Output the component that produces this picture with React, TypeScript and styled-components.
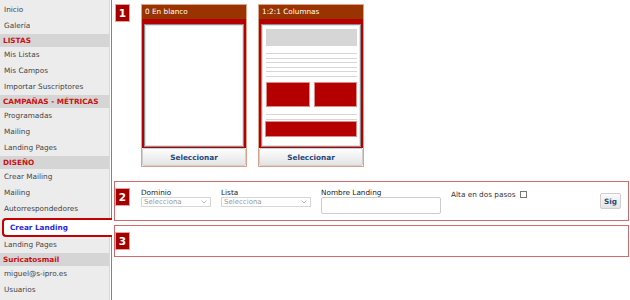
import React from "react";
import styled, { createGlobalStyle } from "styled-components";

const GlobalStyle = createGlobalStyle`
  html, body { margin: 0; padding: 0; background: #fff; }
  body {
    font-family: "DejaVu Sans", Verdana, sans-serif;
    font-size: 7.3px;
    color: #444;
  }
  * { box-sizing: border-box; }
`;

const Page = styled.div`
  display: flex;
  height: 300px;
  overflow: hidden;
`;

const Sidebar = styled.nav`
  width: 110px;
  flex: none;
  background: #ececec;
  border-right: 1px solid #d9d9d9;
  padding-top: 2px;
  display: flex;
  flex-direction: column;
`;

const NavItem = styled.div`
  height: 16px;
  line-height: 16px;
  padding-left: 4px;
  color: #454545;
  white-space: nowrap;
`;

const NavHeader = styled.div`
  height: 13px;
  line-height: 12px;
  padding: 1px 0 0 3px;
  background: #d5d5d5;
  color: #cc1111;
  font-weight: bold;
  white-space: nowrap;
`;

const NavActive = styled.div`
  position: relative;
  z-index: 1;
  margin: 1px -3px 0 2px;
  height: 19px;
  line-height: 15px;
  border: 2px solid #c40000;
  border-right: none;
  border-radius: 4px 0 0 4px;
  background: #fff;
  color: #2a2ad8;
  font-weight: bold;
  padding-left: 6px;
  white-space: nowrap;
`;

const Main = styled.main`
  flex: 1;
  margin-left: 1px;
  border-left: 1px solid #c86464;
  padding: 0 1px 0 2px;
  display: flex;
  flex-direction: column;
  gap: 4px;
`;

const Section = styled.section<{ $framed?: boolean }>`
  display: flex;
  align-items: flex-start;
  gap: 11px;
  border: 1px solid ${(p) => (p.$framed ? "#cf6b6b" : "transparent")};
  padding: ${(p) => (p.$framed ? "6px 7px 6px 0" : "3px 0 9px 0")};
`;

const Badge = styled.div`
  flex: none;
  width: 15px;
  height: 18px;
  background: #a50000;
  border: 1px solid #e3a0a0;
  color: #fff;
  font-weight: bold;
  font-size: 10.5px;
  line-height: 16px;
  text-align: center;
`;

const CardRow = styled.div`
  display: flex;
  gap: 11px;
`;

const Card = styled.div`
  width: 106px;
  border: 1px solid #d8a48e;
  display: flex;
  flex-direction: column;
  background: #fff;
`;

const CardTitle = styled.div`
  height: 14px;
  line-height: 14px;
  background: #993300;
  color: #fff;
  padding-left: 3px;
  white-space: nowrap;
`;

const Frame = styled.div`
  background: #b40000;
  padding: 5px 2px 1px 2px;
`;

const Preview = styled.div`
  height: 123px;
  background: #fff;
  border: 1px solid #8d8d8d;
  box-shadow: inset 0 0 0 1px #e4e4e4;
  padding: 4px 3px 0 4px;
  display: flex;
  flex-direction: column;
`;

const GrayBlock = styled.div`
  height: 17px;
  background: #d6d6d6;
  flex: none;
`;

const Lines = styled.div<{ $top: number }>`
  margin-top: ${(p) => p.$top}px;
  display: flex;
  flex-direction: column;
  gap: 3.5px;
`;

const Line = styled.div`
  height: 1px;
  background: #d6d6d6;
`;

const RedRow = styled.div`
  margin-top: 5.5px;
  display: flex;
  gap: 4px;
  height: 25px;
`;

const RedBlock = styled.div<{ $h?: number; $top?: number }>`
  flex: 1;
  height: ${(p) => p.$h ?? 25}px;
  margin-top: ${(p) => p.$top ?? 0}px;
  background: #b50000;
  border: 1px solid #e08a8a;
`;

const WideRed = styled(RedBlock)`
  flex: none;
  margin-left: -1px;
  width: calc(100% + 1px);
`;

const SelectButton = styled.button`
  height: 18px;
  border: 1px solid #cfcfcf;
  border-radius: 2px;
  background: linear-gradient(#fdfdfd, #e4e4e4);
  color: #25487a;
  font: bold 7.3px "DejaVu Sans", Verdana, sans-serif;
  padding: 0;
  cursor: pointer;
`;

const FormRow = styled.div`
  flex: 1;
  align-self: stretch;
  display: flex;
  align-items: flex-start;
  gap: 10px;
`;

const Field = styled.div<{ $w: number }>`
  width: ${(p) => p.$w}px;
  display: flex;
  flex-direction: column;
`;

const FieldLabel = styled.label`
  height: 9px;
  line-height: 9px;
  color: #222;
  white-space: nowrap;
`;

const FakeSelect = styled.div`
  height: 10px;
  border: 1px solid #d6d6d6;
  display: flex;
  align-items: center;
  justify-content: space-between;
  padding: 0 3px 0 2px;
  color: #9a9a9a;
  font-size: 7px;
  line-height: 8px;
  background: #fff;
`;

const TextInput = styled.input`
  height: 17px;
  border: 1px solid #cccccc;
  border-radius: 2px;
  padding: 0 3px;
  font: 7.3px "DejaVu Sans", Verdana, sans-serif;
  outline: none;
`;

const CheckGroup = styled.label`
  margin-top: 2px;
  display: flex;
  align-items: center;
  gap: 4px;
  line-height: 9px;
  color: #333;
  white-space: nowrap;
`;

const CheckBox = styled.span`
  width: 7px;
  height: 7px;
  border: 1px solid #777;
  background: #fff;
`;

const NextButton = styled.button`
  margin-left: auto;
  align-self: center;
  width: 21px;
  height: 16px;
  border: 1px solid #cfcfcf;
  border-radius: 2px;
  background: linear-gradient(#fbfbfb, #e4e4e4);
  color: #2c4b75;
  font: bold 7.3px "DejaVu Sans", Verdana, sans-serif;
  padding: 0;
`;

const Chevron = () => (
  <svg width="6" height="4" viewBox="0 0 6 4">
    <polyline points="0.5,0.5 3,3 5.5,0.5" fill="none" stroke="#aaa" strokeWidth="0.8" />
  </svg>
);

type NavEntry = { kind: "item" | "header" | "active"; text: string };

const nav: NavEntry[] = [
  { kind: "item", text: "Inicio" },
  { kind: "item", text: "Galería" },
  { kind: "header", text: "LISTAS" },
  { kind: "item", text: "Mis Listas" },
  { kind: "item", text: "Mis Campos" },
  { kind: "item", text: "Importar Suscriptores" },
  { kind: "header", text: "CAMPAÑAS - MÉTRICAS" },
  { kind: "item", text: "Programadas" },
  { kind: "item", text: "Mailing" },
  { kind: "item", text: "Landing Pages" },
  { kind: "header", text: "DISEÑO" },
  { kind: "item", text: "Crear Mailing" },
  { kind: "item", text: "Mailing" },
  { kind: "item", text: "Autorrespondedores" },
  { kind: "active", text: "Crear Landing" },
  { kind: "item", text: "Landing Pages" },
  { kind: "header", text: "Suricatosmail" },
  { kind: "item", text: "miguel@s-ipro.es" },
  { kind: "item", text: "Usuarios" },
];

export default function App() {
  return (
    <>
      <GlobalStyle />
      <Page>
        <Sidebar>
          {nav.map((n, i) =>
            n.kind === "header" ? (
              <NavHeader key={i}>{n.text}</NavHeader>
            ) : n.kind === "active" ? (
              <NavActive key={i}>{n.text}</NavActive>
            ) : (
              <NavItem key={i}>{n.text}</NavItem>
            )
          )}
        </Sidebar>
        <Main>
          <Section>
            <Badge>1</Badge>
            <CardRow>
              <Card>
                <CardTitle>0 En blanco</CardTitle>
                <Frame>
                  <Preview />
                </Frame>
                <SelectButton>Seleccionar</SelectButton>
              </Card>
              <Card>
                <CardTitle>1:2:1 Columnas</CardTitle>
                <Frame>
                  <Preview>
                    <GrayBlock />
                    <Lines $top={7}>
                      <Line />
                      <Line />
                      <Line />
                      <Line />
                      <Line />
                      <Line />
                    </Lines>
                    <RedRow>
                      <RedBlock />
                      <RedBlock />
                    </RedRow>
                    <Lines $top={7}>
                      <Line />
                      <Line />
                    </Lines>
                    <WideRed $h={16} $top={1.5} />
                  </Preview>
                </Frame>
                <SelectButton>Seleccionar</SelectButton>
              </Card>
            </CardRow>
          </Section>
          <Section $framed>
            <Badge>2</Badge>
            <FormRow>
              <Field $w={70}>
                <FieldLabel>Dominio</FieldLabel>
                <FakeSelect>
                  Selecciona
                  <Chevron />
                </FakeSelect>
              </Field>
              <Field $w={90}>
                <FieldLabel>Lista</FieldLabel>
                <FakeSelect>
                  Selecciona
                  <Chevron />
                </FakeSelect>
              </Field>
              <Field $w={120}>
                <FieldLabel>Nombre Landing</FieldLabel>
                <TextInput type="text" />
              </Field>
              <CheckGroup>
                Alta en dos pasos
                <CheckBox />
              </CheckGroup>
              <NextButton>Sig</NextButton>
            </FormRow>
          </Section>
          <Section $framed>
            <Badge>3</Badge>
          </Section>
        </Main>
      </Page>
    </>
  );
}
